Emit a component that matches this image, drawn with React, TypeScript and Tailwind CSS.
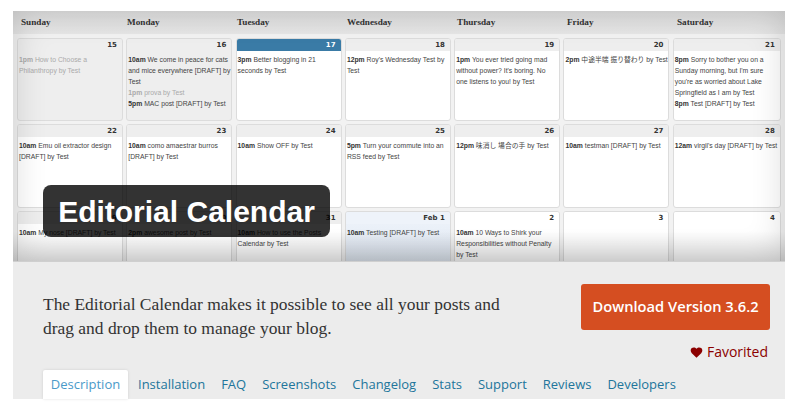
type Post = { time: string; title: string; muted?: boolean; nowrap?: boolean };
type Day = { num: string; posts?: Post[]; kind?: "past" | "today" | "next" | "feb" | "plain" };

const weekdays = ["Sunday", "Monday", "Tuesday", "Wednesday", "Thursday", "Friday", "Saturday"];

const days: Day[] = [
  { num: "15", kind: "past", posts: [{ time: "1pm", title: "How to Choose a Philanthropy by Test", muted: true }] },
  {
    num: "16",
    kind: "past",
    posts: [
      { time: "10am", title: "We come in peace for cats and mice everywhere [DRAFT] by Test" },
      { time: "1pm", title: "prova by Test", muted: true },
      { time: "5pm", title: "MAC post [DRAFT] by Test" },
    ],
  },
  { num: "17", kind: "today", posts: [{ time: "3pm", title: "Better blogging in 21 seconds by Test" }] },
  { num: "18", posts: [{ time: "12pm", title: "Roy's Wednesday Test by Test" }] },
  { num: "19", posts: [{ time: "1pm", title: "You ever tried going mad without power? It's boring. No one listens to you! by Test" }] },
  { num: "20", posts: [{ time: "2pm", title: "中途半端 振り替わり by Test", nowrap: true }] },
  {
    num: "21",
    posts: [
      { time: "8pm", title: "Sorry to bother you on a Sunday morning, but I'm sure you're as worried about Lake Springfield as I am by Test" },
      { time: "8pm", title: "Test [DRAFT] by Test" },
    ],
  },
  { num: "22", posts: [{ time: "10am", title: "Emu oil extractor design [DRAFT] by Test" }] },
  { num: "23", posts: [{ time: "10am", title: "como amaestrar burros [DRAFT] by Test" }] },
  { num: "24", posts: [{ time: "10am", title: "Show OFF by Test" }] },
  { num: "25", posts: [{ time: "5pm", title: "Turn your commute into an RSS feed by Test" }] },
  { num: "26", posts: [{ time: "12pm", title: "味消し 場合の手 by Test" }] },
  { num: "27", posts: [{ time: "10am", title: "testman [DRAFT] by Test" }] },
  { num: "28", posts: [{ time: "12am", title: "virgil's day [DRAFT] by Test" }] },
  { num: "29", posts: [{ time: "10am", title: "My nose [DRAFT] by Test" }] },
  { num: "30", posts: [{ time: "2pm", title: "awesome post by Test" }] },
  { num: "31", posts: [{ time: "10am", title: "How to use the Posts Calendar by Test" }] },
  { num: "Feb 1", kind: "feb", posts: [{ time: "10am", title: "Testing [DRAFT] by Test" }] },
  { num: "2", kind: "next", posts: [{ time: "10am", title: "10 Ways to Shirk your Responsibilities without Penalty by Test" }] },
  { num: "3", kind: "next" },
  { num: "4", kind: "next" },
];

const tabs = ["Installation", "FAQ", "Screenshots", "Changelog", "Stats", "Support", "Reviews", "Developers"];

function DayCell({ day }: { day: Day }) {
  const kind = day.kind ?? "plain";
  const bodyBg =
    kind === "past" ? "bg-[#eeeeee]" : kind === "feb" ? "bg-gradient-to-b from-[#eef3fa] to-[#dbe5f1]" : "bg-white";
  const headBg =
    kind === "today"
      ? "bg-[#3a7ba6] text-white"
      : kind === "feb"
        ? "bg-[#eef3fa] text-[#333333]"
        : kind === "next"
          ? "bg-white text-[#333333]"
          : "bg-[#eeeeee] text-[#333333]";

  return (
    <div className={`h-full overflow-hidden rounded-[3px] border border-[#dcdcdc] ${bodyBg}`}>
      <div className={`flex h-[12px] items-center justify-end pr-[5px] font-['DejaVu_Sans',sans-serif] text-[7px] font-bold ${headBg}`}>
        {day.num}
      </div>
      <div className="px-[1px] pt-[3px] font-['Liberation_Sans','Noto_Sans_CJK_JP',sans-serif] text-[6.8px] leading-[11px] text-[#444444]">
        {day.posts?.map((post, i) => (
          <div key={i} className={`${post.muted ? "text-[#aaaaaa]" : ""} ${post.nowrap ? "whitespace-nowrap" : ""}`}>
            <b className={post.muted ? "font-bold text-[#aaaaaa]" : "font-bold text-[#333333]"}>{post.time}</b> {post.title}
          </div>
        ))}
      </div>
    </div>
  );
}

export default function App() {
  return (
    <div className="min-h-[413px] bg-white px-[13px] pt-[11px] font-['Open_Sans',sans-serif]">
      <div className="relative h-[250px] overflow-hidden bg-[#f2f2f2]">
        <div className="grid h-[23px] grid-cols-[106px_repeat(6,110px)] items-center bg-gradient-to-b from-[#dedede] to-[#e6e6e6] pl-[8px] pt-[1px]">
          {weekdays.map((d) => (
            <div key={d} className="font-['Liberation_Serif',serif] text-[9.2px] font-bold text-[#333333]">
              {d}
            </div>
          ))}
        </div>
        <div className="grid grid-cols-[repeat(6,106px)_108px] grid-rows-[83px_84px_84px] gap-x-[3.3px] gap-y-[3px] px-[4px] pt-[4px]">
          {days.map((day) => (
            <DayCell key={day.num} day={day} />
          ))}
        </div>

        {/* soft vignette on the screenshot edges */}
        <div className="pointer-events-none absolute inset-0 shadow-[inset_0_0_34px_rgba(0,0,0,0.16)]" />
        <div className="pointer-events-none absolute inset-x-0 bottom-0 h-[30px] bg-gradient-to-b from-transparent to-[#00000022]" />

        <div className="absolute left-[30px] top-[174px] flex h-[52px] w-[287px] items-center justify-center rounded-[8px] bg-[#000000cc] font-['Liberation_Sans',sans-serif] text-[30px] font-bold text-white">
          Editorial Calendar
        </div>
      </div>

      <div className="h-[138px] border-t border-[#cfcfcf] bg-[#ececec]">
        <div className="flex h-[108px] justify-between pl-[30px] pr-[15px]">
          <p className="w-[480px] pt-[30px] font-['Liberation_Serif',serif] text-[17.45px] leading-[24px] text-[#333333]">
            The Editorial Calendar makes it possible to see all your posts and drag and drop them to manage your blog.
          </p>
          <div className="flex flex-col items-end pt-[22px]">
            <div className="flex h-[46px] w-[189px] items-center justify-center rounded-[3px] bg-[#d54e21] pb-[2px] text-[14.7px] font-semibold text-white">
              Download Version 3.6.2
            </div>
            <div className="mt-[12px] flex items-center gap-[4px] pr-[2px] text-[14px] leading-[20px] text-[#8b0000]">
              <svg width="13" height="11" viewBox="0 0 24 22" fill="#8b0000">
                <path d="M12 21.5 2.6 12.3C-.5 9.2-.3 4.6 2.6 2.2 5.4-.1 9.6.4 12 3.6 14.4.4 18.6-.1 21.4 2.2c2.9 2.4 3.1 7 0 10.1z" />
              </svg>
              Favorited
            </div>
          </div>
        </div>
        <div className="flex h-[29px] items-end pl-[30px] text-[13px]">
          <div className="flex h-[29px] w-[85px] items-center justify-center rounded-t-[2px] bg-white text-[#4a9ac9] shadow-[0_0_3px_rgba(0,0,0,0.12)]">
            Description
          </div>
          <div className="ml-[10px] flex h-[29px] items-center gap-[16px] text-[#21759b]">
            {tabs.map((t) => (
              <span key={t}>{t}</span>
            ))}
          </div>
        </div>
      </div>
    </div>
  );
}
